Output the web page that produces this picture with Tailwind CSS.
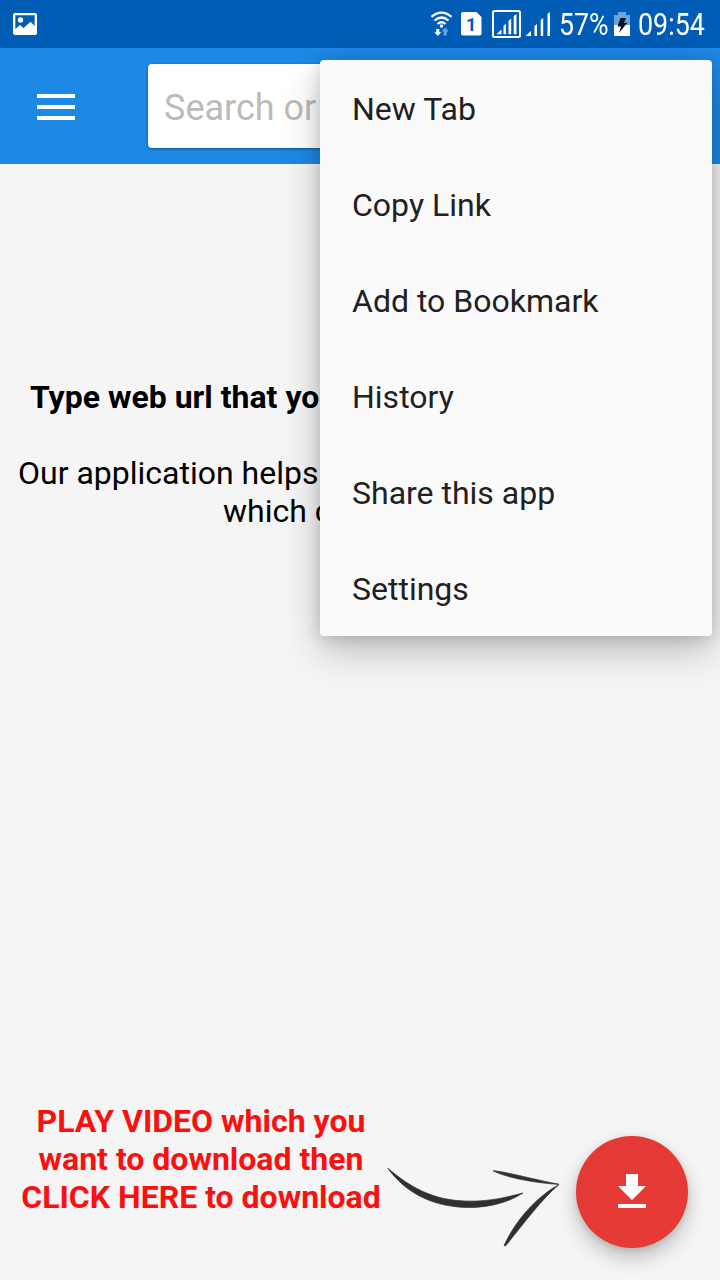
<!DOCTYPE html>
<html lang="en">
<head>
<meta charset="utf-8">
<title>Video Downloader Browser</title>
<script src="https://cdn.jsdelivr.net/npm/@tailwindcss/browser@4"></script>
</head>
<body class="font-['Roboto',sans-serif] bg-[#f5f5f5]">
<div class="relative flex h-[1280px] w-[720px] flex-col overflow-hidden bg-[#f5f5f5]">
  <!-- Status bar -->
  <div class="flex h-12 shrink-0 items-center bg-[#005cb4] pl-[13px] text-white">
    <svg class="h-[22px] w-6" viewBox="0 0 24 22"><path fill="#fff" fill-rule="evenodd" d="M2 0H22Q24 0 24 2V20Q24 22 22 22H2Q0 22 0 20V2Q0 0 2 0ZM2.3 2.3V16L7 12L10.500 15L17.500 8.800L21.700 13V2.300Z"/><circle cx="7.500" cy="7" r="2.700" fill="#fff"/></svg>
    <svg class="ml-[393px] h-12 w-[122px] shrink-0" viewBox="430 0 122 48">
      <g fill="none" stroke="#fff" stroke-width="2.300"><path d="M431.500 16.800Q441.500 8.500 451.500 16.800"/><path d="M434.500 20.500Q441.500 14.500 448.500 20.500"/><path d="M437.500 24Q441.500 20.500 445.500 24"/></g>
      <circle cx="441.500" cy="26" r="1.700" fill="#fff"/>
      <path d="M436.300 29h3v3.300h2l-3.500 3.700-3.500-3.700h2z" fill="#fff"/>
      <path d="M443.700 35.500h3V31.500h2l-3.500-4-3.500 4h2z" fill="#5aa7ee"/>
      <path d="M463 12H476.500L481.500 17V33.500Q481.500 35.500 479.500 35.500H463Q461 35.500 461 33.500V14Q461 12 463 12Z" fill="#fff"/>
      <text x="471.200" y="31" text-anchor="middle" font-family="Roboto" font-weight="700" font-size="18" fill="#005cb4">1</text>
      <rect x="493" y="11" width="27" height="26" rx="1.500" fill="none" stroke="#fff" stroke-width="2"/>
      <path d="M496.500 34.200L501.500 29.500V34.200ZM503.500 25.800L506 23.800V34.200H503.500ZM508.500 20.800L511.200 18.800V34.200H508.500ZM513.700 16L516.500 14V34.200H513.700Z" fill="#fff"/>
      <path d="M525.500 36L531 31V36ZM534.500 26L537 24V36H534.500ZM540.700 20L543.200 18V36H540.700ZM547.500 14L550 12V36H547.500Z" fill="#fff"/>
    </svg>
    <span class="ml-[7px] inline-block w-[55px] origin-left scale-x-[.86] text-[31px] leading-[48px] pt-[2px]">57%</span>
    <svg class="h-12 w-4 shrink-0" viewBox="614 0 16 48"><path fill="#67a3dc" d="M618 12h8v3h4v10h-16V15h4z"/><path fill="#fff" d="M614 25h16v11h-16z"/><path fill="#081018" d="M620.500 18H626L624 23L627.500 22.500L619 33L621 26.500H617.500Z"/></svg>
    <span class="ml-2 inline-block origin-left scale-x-[.865] text-[31px] leading-[48px] pt-[2px]">09:54</span>
  </div>
  <!-- Toolbar -->
  <header class="flex h-[116px] shrink-0 items-center bg-[#1e88e5] pl-[37px]">
    <div class="flex w-[38px] flex-col gap-[7px] pt-[2px]">
      <div class="h-1 bg-white"></div><div class="h-1 bg-white"></div><div class="h-1 bg-white"></div>
    </div>
    <div class="ml-[73px] flex h-[84px] w-[420px] items-center rounded bg-white px-4 text-4xl text-[#bbbbbb] shadow-[0_1px_3px_rgba(0,0,0,0.4)]"><span class="pt-[3px]">Search or</span></div>
  </header>
  <!-- Page -->
  <main class="flex flex-1 flex-col pt-[214px] text-[32px] leading-[38px] text-black">
    <p class="pl-[30px] font-bold whitespace-nowrap">Type web url that you</p>
    <p class="mt-[38px] pl-[18px]">Our application helps</p>
    <p class="pl-[223px]">which c</p>
    <div class="mt-auto flex h-[180px] items-start">
      <p class="mt-[2px] ml-[12px] w-[378px] text-center font-bold text-[#fb1010]">PLAY VIDEO which you<br>want to download then<br>CLICK HERE to download</p>
      <svg class="mt-[60px] -ml-[4px] h-[96px] w-[180px] shrink-0 blur-[0.5px]" viewBox="386 1160 180 96" fill="#303030" stroke="#303030" stroke-width="0.700" stroke-linejoin="round">
        <path d="M387.800 1168.300C400 1178 421 1196.500 455 1200.300C485 1203.500 507 1197 523 1193C508 1203 484 1209.500 458 1207C421 1203.500 400 1185 387.800 1168.300Z"/>
        <path d="M493 1170.800C503 1171 530 1178.500 559 1184.300C538 1183.500 507 1178 493 1170.800Z"/>
        <path d="M559 1184.500C541 1200 525 1222 505.500 1246L504 1245.500C517 1218 538 1196 559 1184.500Z"/>
      </svg>
      <button class="mt-[36px] ml-[10px] flex size-28 shrink-0 items-center justify-center rounded-full bg-[#e53935] pb-[2px] shadow-[0_10px_20px_rgba(0,0,0,0.22),0_2px_6px_rgba(0,0,0,0.12)]">
        <svg class="h-[34px] w-7" viewBox="0 0 28 34"><path fill="#fff" d="M8 0H20V12H28L14 26L0 12H8ZM0 30H28V34H0Z"/></svg>
      </button>
    </div>
  </main>
  <!-- Overflow menu -->
  <nav class="absolute top-[60px] left-[320px] flex w-[392px] flex-col rounded bg-[#fafafa] text-[32px] text-[#212121] shadow-[0_16px_38px_rgba(0,0,0,0.22),0_2px_16px_rgba(0,0,0,0.16)]">
    <a class="flex h-24 items-center px-8 pt-[2px]">New Tab</a>
    <a class="flex h-24 items-center px-8 pt-[2px]">Copy Link</a>
    <a class="flex h-24 items-center px-8 pt-[2px]">Add to Bookmark</a>
    <a class="flex h-24 items-center px-8 pt-[2px]">History</a>
    <a class="flex h-24 items-center px-8 pt-[2px]">Share this app</a>
    <a class="flex h-24 items-center px-8 pt-[2px]">Settings</a>
  </nav>
</div>
</body>
</html>
